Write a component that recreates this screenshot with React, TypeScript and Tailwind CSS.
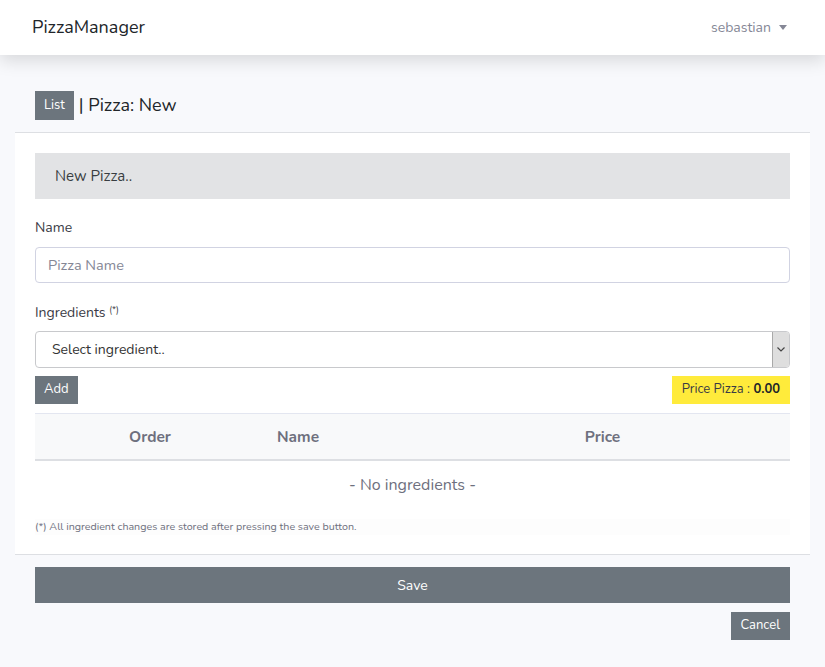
import React from "react";

export default function App() {
  const font = { fontFamily: '"Nunito", "Open Sans", "Noto Sans", sans-serif' };
  return (
    <div className="min-h-[667px] w-full bg-[#f8f9fc] text-[#212529]" style={font}>
      <nav className="relative z-10 flex h-[55px] items-center justify-between bg-white pl-[32px] pr-[38px] shadow-[0_6px_16px_rgba(0,0,0,0.13)]">
        <span className="text-[18px] text-[#212529]">PizzaManager</span>
        <span className="flex items-center gap-[8px] text-[14px] text-[#858796]">
          sebastian
          <span className="inline-block h-0 w-0 border-l-[4px] border-r-[4px] border-t-[5px] border-l-transparent border-r-transparent border-t-[#858796]" />
        </span>
      </nav>

      <div className="flex items-center px-[35px] pt-[36px] pb-[12px]">
        <button className="h-[29px] bg-[#6c757d] px-[9px] text-[13px] text-white">List</button>
        <span className="ml-[5px] text-[18px] text-[#212529]">| Pizza: New</span>
      </div>

      <div className="mx-[15px] border-y border-[#dddfe3] bg-white px-[20px] pt-[20px] pb-[19px]">
        <div className="flex h-[46px] items-center bg-[#e2e3e5] px-[20px] text-[15px] text-[#383d41]">New Pizza..</div>

        <div className="mt-[18px] text-[14px] text-[#3a3b45]">Name</div>
        <input
          className="mt-[9px] h-[36px] w-full rounded-[4px] border border-[#d1d3e2] px-[12px] text-[14.5px] text-[#6e707e] placeholder:text-[#858796] outline-none"
          placeholder="Pizza Name"
          style={font}
        />

        <div className="mt-[19px] text-[14px] text-[#3a3b45]">
          Ingredients <sup className="text-[9px]">(*)</sup>
        </div>
        <div className="mt-[8px] flex h-[37px] w-full items-center rounded-[4px] border border-[#c8c9cc] pl-[16px] pr-0 text-[14px] text-[#333]">
          <span className="flex-1">Select ingredient..</span>
          <span className="flex h-[35px] w-[17px] items-center justify-center rounded-r-[3px] border-l border-[#a9a9a9] bg-[#dedede]">
            <svg width="8" height="5" viewBox="0 0 8 5">
              <path d="M0.5 0.5 L4 4 L7.5 0.5" stroke="#444" strokeWidth="1.2" fill="none" />
            </svg>
          </span>
        </div>

        <div className="mt-[8px] flex items-center justify-between">
          <button className="h-[28px] bg-[#6c757d] px-[9px] text-[13px] text-white">Add</button>
          <span className="flex h-[28px] items-center bg-[#ffeb3b] px-[10px] text-[13px] text-[#3a3b45]">
            Price Pizza :&nbsp;<b className="text-[#212529]">0.00</b>
          </span>
        </div>

        <div className="mt-[9px] grid h-[48px] grid-cols-[230px_150px_1fr] items-center border-t border-b-2 border-t-[#e3e6f0] border-b-[#dddfe3] bg-[#f8f9fa] text-[15.5px] font-bold text-[#6e707e]">
          <span className="text-center">Order</span>
          <span className="pl-[12px]">Name</span>
          <span className="text-center">Price</span>
        </div>
        <div className="pt-[12px] text-center text-[16px] text-[#6e707e]">- No ingredients -</div>

        <div className="mt-[22px] bg-[#fdfdfd] text-[10.7px] text-[#6e707e]">
          (*) All ingredient changes are stored after pressing the save button.
        </div>
      </div>

      <div className="px-[35px] pt-[12px]">
        <button className="flex h-[36px] w-full items-center justify-center bg-[#6c757d] text-[14px] text-white">Save</button>
        <div className="mt-[9px] flex justify-end">
          <button className="h-[28px] bg-[#6c757d] px-[10px] text-[13px] text-white">Cancel</button>
        </div>
      </div>
    </div>
  );
}
